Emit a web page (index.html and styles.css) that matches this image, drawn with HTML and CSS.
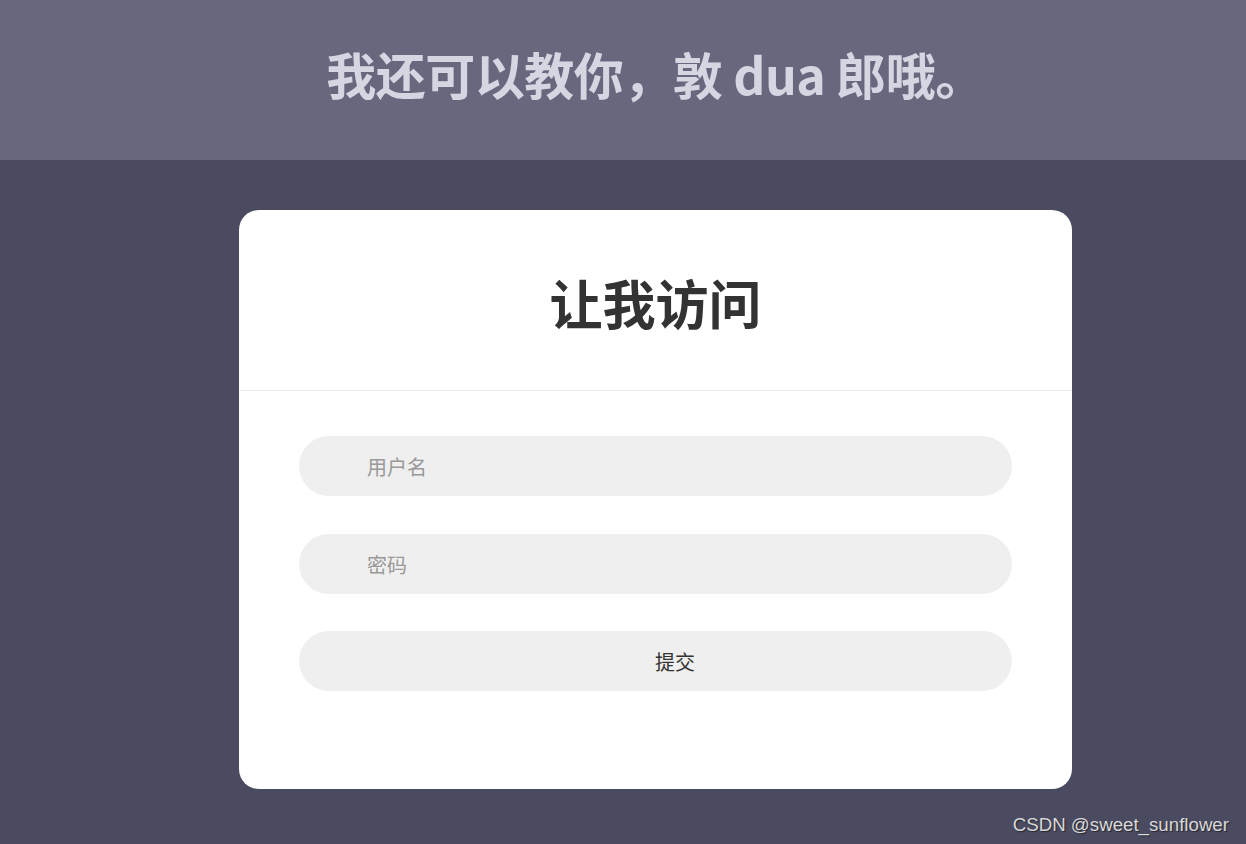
FILE: index.html
```html
<!DOCTYPE html>
<html lang="zh">
<head>
<meta charset="utf-8">
<title>让我访问</title>
<link rel="stylesheet" href="styles.css">
</head>
<body>
<header class="top">
  <h1 class="top-title">我还可以教你，敦 dua 郎哦。</h1>
</header>
<main class="stage">
  <section class="card">
    <div class="card-head">
      <h2 class="card-title">让我访问</h2>
    </div>
    <form class="card-form">
      <input class="field" type="text" placeholder="用户名">
      <input class="field field-second" type="password" placeholder="密码">
      <button class="submit" type="button">提交</button>
    </form>
  </section>
</main>
<div class="watermark">CSDN @sweet_sunflower</div>
</body>
</html>
```

FILE: styles.css
```css
html, body {
  margin: 0;
  padding: 0;
  height: 100%;
}
body {
  background: #4a4a60;
  font-family: "Noto Sans CJK SC", "Noto Sans", sans-serif;
  overflow: hidden;
}
.top {
  height: 160px;
  background: #67687e;
  display: flex;
  align-items: center;
  justify-content: center;
  padding-left: 65px;
}
.top-title {
  margin: 0;
  font-size: 50px;
  font-weight: 700;
  color: #d6d6e3;
  line-height: 1;
  letter-spacing: -0.5px;
  padding-bottom: 14px;
}
.stage {
  display: flex;
  justify-content: center;
  padding-left: 65px;
  padding-top: 50px;
}
.card {
  width: 833px;
  background: #fff;
  border-radius: 20px;
}
.card-head {
  height: 180px;
  border-bottom: 1px solid #ececec;
  display: flex;
  align-items: center;
  justify-content: center;
}
.card-title {
  margin: 0;
  font-size: 53px;
  font-weight: 700;
  color: #333;
  line-height: 1;
  padding-top: 4px;
}
.card-form {
  display: flex;
  flex-direction: column;
  padding: 45px 60px 98px;
}
.field, .submit {
  display: block;
  box-sizing: border-box;
  width: 713px;
  height: 60px;
  border: none;
  outline: none;
  border-radius: 30px;
  background: #efefef;
  font-family: "Noto Sans CJK SC", "Noto Sans", sans-serif;
  font-size: 20px;
  color: #333;
  margin: 0;
}
.field {
  padding: 0 68px;
}
.field-second {
  margin: 38px 0 37px;
}
.field::placeholder {
  color: #999;
}
.submit {
  text-align: center;
  color: #333;
  padding: 0 0 0 39px;
}
.watermark {
  position: absolute;
  right: 17px;
  bottom: 8px;
  font-family: "Liberation Sans", Arial, sans-serif;
  font-size: 18.7px;
  color: #d8d8d8;
  text-shadow: 1px 1px 1px rgba(0,0,0,0.5);
}
```
